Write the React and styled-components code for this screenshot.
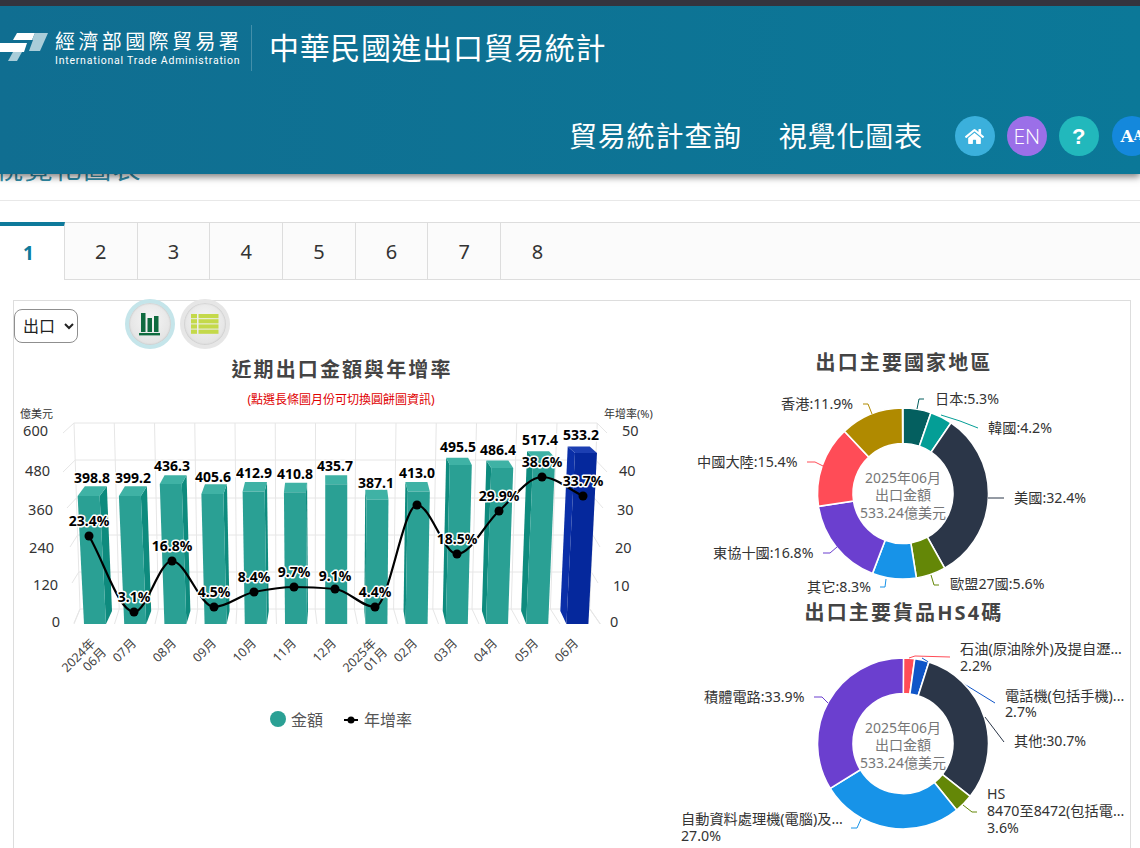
import React from 'react';
import styled, { createGlobalStyle } from 'styled-components';
import { FaHome } from 'react-icons/fa';

const FONT = '"Noto Sans", "Noto Sans CJK TC", sans-serif';

const GlobalStyle = createGlobalStyle`
  html, body {
    margin: 0;
    height: 848px;
    overflow: hidden;
    background: #fff;
    font-family: ${FONT};
  }
`;

const Header = styled.header`
  position: absolute;
  top: 0;
  left: 0;
  right: 0;
  z-index: 5;
  box-sizing: border-box;
  height: 174px;
  border-top: 6px solid #34343e;
  background: linear-gradient(90deg, #106e91, #0b7898);
  box-shadow: 0 3px 7px rgba(0, 0, 0, 0.5);
  color: #fff;
  overflow: hidden;
`;

const TopRow = styled.div`
  display: flex;
  align-items: center;
  height: 84px;
`;

const LogoText = styled.div`
  margin-left: 6px;
  width: 190px;
`;

const LogoName = styled.div`
  font-size: 20px;
  line-height: 24px;
  letter-spacing: 3.4px;
  white-space: nowrap;
`;

const LogoEnglish = styled.div`
  font-family: "Roboto", sans-serif;
  font-size: 10.5px;
  line-height: 13px;
  letter-spacing: 0.78px;
  white-space: nowrap;
`;

const Divider = styled.div`
  width: 1px;
  height: 46px;
  margin: 0 17px 0 6px;
  background: rgba(255, 255, 255, 0.22);
`;

const SiteTitle = styled.div`
  margin-top: -4px;
  font-size: 30px;
  letter-spacing: 0.65px;
  white-space: nowrap;
`;

const NavRow = styled.nav`
  display: flex;
  align-items: center;
  margin-top: 26px;
  padding-left: 569px;
  height: 40px;
`;

const NavLink = styled.a`
  margin-top: -2px;
  margin-right: 37px;
  font-size: 28px;
  letter-spacing: 0.8px;
  white-space: nowrap;
`;

const RoundButton = styled.span`
  flex: none;
  display: flex;
  align-items: center;
  justify-content: center;
  width: 40px;
  height: 40px;
  margin-left: ${(p) => p.$gap || 12}px;
  border-radius: 50%;
  background: ${(p) => p.$bg};
  font-size: 21px;
`;

const EnText = styled.span`
  font-family: "Open Sans", sans-serif;
  font-weight: 300;
`;

const Question = styled.span`
  margin-top: 2px;
  font-family: "Liberation Sans", sans-serif;
  font-weight: 700;
  font-size: 22px;
`;

const FontA = styled.span`
  font-family: "DejaVu Serif", serif;
  font-weight: 700;
  font-size: ${(p) => p.$size}px;
  line-height: 1;
`;

const Main = styled.main`
  padding-top: 150px;
`;

const PageTitle = styled.h1`
  box-sizing: border-box;
  height: 51px;
  margin: 0 0 21px;
  text-indent: -5px;
  font-size: 28px;
  line-height: 36px;
  font-weight: 400;
  letter-spacing: 1.4px;
  color: #2f8ba6;
  border-bottom: 1px solid #e8e8e8;
`;

const TabBar = styled.div`
  display: flex;
  height: 58px;
  box-sizing: border-box;
  border-top: 1px solid #ddd;
  border-bottom: 1px solid #ddd;
  background: #fbfbfb;
`;

const Tab = styled.div`
  box-sizing: border-box;
  width: 72.7px;
  display: flex;
  align-items: center;
  justify-content: center;
  font-size: 20px;
  color: #333;
  border-right: 1px solid #ddd;

  &:last-child {
    border-right: 0;
  }
`;

const ActiveTab = styled(Tab)`
  width: 65px;
  margin: -1px 0;
  padding: 0 7px 0 0;
  color: #0e7a9b;
  font-weight: 700;
  font-size: 19px;
  background: #fff;
  border-top: 4px solid #0e7a9b;
`;

const Panel = styled.section`
  box-sizing: border-box;
  width: 1118px;
  height: 600px;
  margin: 20px 0 0 13px;
  border: 1px solid #ddd;
  display: grid;
  grid-template-columns: 654px 454px;
  column-gap: 8px;
`;

const Toolbar = styled.div`
  display: flex;
  align-items: center;
  height: 46px;
  margin-bottom: 9px;
`;

const TypeSelect = styled.select`
  width: 64px;
  height: 34px;
  margin: 4px 47px 0 0;
  padding-left: 4px;
  border: 1px solid #8f8f8f;
  border-radius: 8px;
  background: #fff;
  color: #222;
  font-family: ${FONT};
  font-size: 16px;
`;

const ViewButton = styled.button`
  box-sizing: border-box;
  width: 50px;
  height: 50px;
  margin-right: 5px;
  padding: 0;
  display: flex;
  align-items: center;
  justify-content: center;
  border-radius: 50%;
  border: 4px solid ${(p) => p.$ring};
  background: radial-gradient(circle at 50% 40%, #f6f6f6, #dcdcdc);
  box-shadow: inset 0 0 2px rgba(0, 0, 0, 0.25);
`;

const ChartTitle = styled.h2`
  margin: 0 -2px 0 0;
  text-align: center;
  font-size: 20px;
  line-height: 28px;
  font-weight: 700;
  letter-spacing: 2.1px;
  color: #444;
`;

const ChartHint = styled.div`
  margin-top: 8px;
  text-align: center;
  font-size: 12px;
  line-height: 16px;
  color: #e00000;
`;

const ChartSvg = styled.svg`
  display: block;
  overflow: visible;
`;

const RightColumn = styled.div`
  padding-top: 48px;
`;

const AxisText = styled.text`
  font-size: ${(p) => p.$size || 14.5}px;
  fill: #333;
`;

const MonthText = styled.text`
  font-size: 12.5px;
  fill: #444;
`;

const DataLabel = styled.text`
  font-size: 14px;
  font-weight: 700;
  fill: #000;
  stroke: #fff;
  stroke-width: 3px;
  paint-order: stroke;
  stroke-linejoin: round;
`;

const LegendText = styled.text`
  font-size: 16px;
  fill: #555;
`;

const SliceLabel = styled.text`
  font-size: 14.2px;
  fill: #333;
`;

const CenterText = styled.text`
  font-size: 14px;
  fill: #777;
`;

// value, growth, point of the line, places of the two labels (page px)
const months = [
  { v: 398.8, g: '23.4%', p: [89, 536], vx: 92, vy: 478, gy: 521 },
  { v: 399.2, g: '3.1%', p: [134, 612], vx: 133, vy: 478, gy: 597 },
  { v: 436.3, g: '16.8%', p: [172, 561], vx: 172, vy: 466, gy: 546 },
  { v: 405.6, g: '4.5%', p: [214, 607], vx: 213, vy: 477, gy: 592 },
  { v: 412.9, g: '8.4%', p: [254, 592], vx: 254, vy: 473, gy: 577 },
  { v: 410.8, g: '9.7%', p: [294, 587], vx: 295, vy: 474, gy: 572 },
  { v: 435.7, g: '9.1%', p: [335, 589], vx: 335, vy: 466, gy: 576 },
  { v: 387.1, g: '4.4%', p: [375, 607], vx: 376, vy: 483, gy: 592 },
  { v: 413.0, g: '', p: [417, 505], vx: 417, vy: 473, gy: 490 },
  { v: 495.5, g: '18.5%', p: [457, 554], vx: 458, vy: 447, gy: 539 },
  { v: 486.4, g: '29.9%', p: [499, 511], vx: 498, vy: 450, gy: 496 },
  { v: 517.4, g: '38.6%', p: [542, 477], vx: 540, vy: 440, gy: 462 },
  { v: 533.2, g: '33.7%', p: [583, 496], vx: 581, vy: 435, gy: 481 },
];

const monthLabels = [
  ['06月', 107, 653], ['07月', 137, 644], ['08月', 177, 644], ['09月', 217, 644],
  ['10月', 257, 644], ['11月', 297, 644], ['12月', 337, 644], ['01月', 388, 653],
  ['02月', 418, 644], ['03月', 458, 644], ['04月', 498, 644], ['05月', 539, 644], ['06月', 579, 644],
];

const leftAxis = [['600', 48, 431], ['480', 50, 471], ['360', 53, 510], ['240', 54, 548], ['120', 58, 585], ['0', 60, 622]];
const rightAxis = [['50', 622, 431], ['40', 619, 471], ['30', 617, 510], ['20', 615, 548], ['10', 613, 586], ['0', 610, 622]];

const TEAL = { front: '#2aa094', top: '#3fb2a5', side: '#0e8b7e' };
const BLUE = { front: '#05289c', top: '#1c3fb2', side: '#0a2fa8' };

function pts(list) {
  return list.map((p) => p.join(',')).join(' ');
}

function Bar({ index, value, colors }) {
  const bl = 84 + 40.2 * index;
  const xc = bl + 11;
  const h = value * 0.3207;
  const topY = 624 - h;
  const shift = (xc - 335) * 0.000207 * h;
  const tl = bl + shift;
  const tr = tl + 22;
  const dxT = (335 - xc) * 0.03;
  const dyT = -(10 - (h - 126) * 0.08);
  const dxB = (335 - xc) * 0.025;
  const sideBottom = xc < 335 ? bl + 22 : bl;
  const sideTop = xc < 335 ? tr : tl;
  return (
    <g>
      <polygon
        fill={colors.side}
        points={pts([[sideTop, topY], [sideTop + dxT, topY + dyT], [sideBottom + dxB, 611], [sideBottom, 624]])}
      />
      <polygon
        fill={colors.top}
        points={pts([[tl, topY], [tr, topY], [tr + dxT, topY + dyT], [tl + dxT, topY + dyT]])}
      />
      <polygon fill={colors.front} points={pts([[tl, topY], [tr, topY], [bl + 22, 624], [bl, 624]])} />
    </g>
  );
}

// monotone curve through the points, flat at each peak and dip
function smoothLine(points) {
  const n = points.length;
  const slopes = [];
  for (let i = 0; i < n - 1; i++) {
    slopes.push((points[i + 1][1] - points[i][1]) / (points[i + 1][0] - points[i][0]));
  }
  const m = points.map((_, i) => {
    if (i === 0) return slopes[0];
    if (i === n - 1) return slopes[n - 2];
    if (slopes[i - 1] * slopes[i] <= 0) return 0;
    return (2 * slopes[i - 1] * slopes[i]) / (slopes[i - 1] + slopes[i]);
  });
  let d = `M${points[0][0]} ${points[0][1]}`;
  for (let i = 0; i < n - 1; i++) {
    const dx = (points[i + 1][0] - points[i][0]) / 3;
    d += ` C${points[i][0] + dx} ${points[i][1] + m[i] * dx} ${points[i + 1][0] - dx} ${points[i + 1][1] - m[i + 1] * dx} ${points[i + 1][0]} ${points[i + 1][1]}`;
  }
  return d;
}

function Grid() {
  const rows = [423, 460, 498, 535, 572, 609];
  const stubs = [[63, 433], [63, 472], [67, 508], [70, 547], [72, 583], [74, 623]];
  const stubsRight = [[607, 433], [607, 472], [603, 508], [600, 547], [598, 583], [600, 624]];
  const lines = [];
  rows.forEach((y, i) => {
    const left = 74 + i * 1.2;
    const right = 597 - i * 1.4;
    lines.push([left, y, right, y]);
    lines.push([left, y, stubs[i][0], stubs[i][1]]);
    lines.push([right, y, stubsRight[i][0], stubsRight[i][1]]);
  });
  for (let i = 0; i <= 13; i++) {
    const bottom = 80 + 39.2 * i;
    lines.push([74 + 40.25 * i, 423, bottom, 609]);
    lines.push([bottom, 609, 74 + 40.5 * i, 624]);
  }
  return (
    <g stroke="#e6e6e6" strokeWidth="1">
      {lines.map((l, i) => (
        <line key={i} x1={l[0]} y1={l[1]} x2={l[2]} y2={l[3]} />
      ))}
    </g>
  );
}

function TrendChart() {
  return (
    <ChartSvg width="654" height="340" viewBox="14 408 654 340">
      <AxisText $size={11} x="20" y="418">億美元</AxisText>
      <AxisText $size={11} x="604" y="418">年增率(%)</AxisText>
      <Grid />
      {leftAxis.map(([t, x, y]) => (
        <AxisText key={t} x={x} y={y + 5} textAnchor="end">{t}</AxisText>
      ))}
      {rightAxis.map(([t, x, y]) => (
        <AxisText key={t} x={x} y={y + 5}>{t}</AxisText>
      ))}
      {months.map((m, i) => (
        <Bar key={i} index={i} value={m.v} colors={i === 12 ? BLUE : TEAL} />
      ))}
      <path d={smoothLine(months.map((m) => m.p))} fill="none" stroke="#000" strokeWidth="2.2" />
      {months.map((m, i) => (
        <circle key={i} cx={m.p[0]} cy={m.p[1]} r="4.5" fill="#000" />
      ))}
      {months.map((m, i) => (
        <DataLabel key={i} x={m.vx} y={m.vy + 5} textAnchor="middle">{m.v.toFixed(1)}</DataLabel>
      ))}
      {months.map((m, i) => (
        <DataLabel key={i} x={m.p[0]} y={m.gy + 5} textAnchor="middle">{m.g}</DataLabel>
      ))}
      <MonthText x="96" y="644" textAnchor="end" transform="rotate(-45 96 644)">2024年</MonthText>
      <MonthText x="377" y="644" textAnchor="end" transform="rotate(-45 377 644)">2025年</MonthText>
      {monthLabels.map(([t, x, y], i) => (
        <MonthText key={i} x={x} y={y} textAnchor="end" transform={`rotate(-45 ${x} ${y})`}>{t}</MonthText>
      ))}
      <circle cx="278" cy="719" r="8" fill={TEAL.front} />
      <LegendText x="291" y="726">金額</LegendText>
      <line x1="344" y1="720" x2="358" y2="720" stroke="#000" strokeWidth="2" />
      <circle cx="351" cy="720" r="3.5" fill="#000" />
      <LegendText x="364" y="726">年增率</LegendText>
    </ChartSvg>
  );
}

function slicePath(cx, cy, from, to) {
  const R = 85.5;
  const r = 50;
  const point = (rad, pct) => {
    const a = (pct / 100) * Math.PI * 2 - Math.PI / 2;
    return `${cx + rad * Math.cos(a)} ${cy + rad * Math.sin(a)}`;
  };
  const large = to - from > 50 ? 1 : 0;
  return `M${point(R, from)} A${R} ${R} 0 ${large} 1 ${point(R, to)} L${point(r, to)} A${r} ${r} 0 ${large} 0 ${point(r, from)} Z`;
}

function Donut({ title, slices, labels, cy, top, height }) {
  let sum = 0;
  return (
    <div>
      <ChartTitle>{title}</ChartTitle>
      <ChartSvg width="454" height={height} viewBox={`676 ${top} 454 ${height}`}>
        {slices.map((s) => {
          const from = sum;
          sum += s.pct;
          return (
            <g key={s.color + s.pct}>
              <path d={slicePath(903, cy, from, sum)} fill={s.color} stroke="#fff" strokeWidth="1.6" />
              <polyline points={s.line} fill="none" stroke={s.color} strokeWidth="1" />
            </g>
          );
        })}
        {labels.map(([t, x, y]) => (
          <SliceLabel key={t} x={x} y={y + 5}>{t}</SliceLabel>
        ))}
        <CenterText x="903" y={cy - 11} textAnchor="middle">2025年06月</CenterText>
        <CenterText x="903" y={cy + 6} textAnchor="middle">出口金額</CenterText>
        <CenterText x="903" y={cy + 24} textAnchor="middle">533.24億美元</CenterText>
      </ChartSvg>
    </div>
  );
}

const countrySlices = [
  { pct: 5.3, color: '#045f5f', line: '917,409 919,399 924,399' },
  { pct: 4.2, color: '#049e96', line: '941,415 960,421 978,428' },
  { pct: 32.4, color: '#2b3648', line: '988,498 1004,498' },
  { pct: 5.6, color: '#648707', line: '931,575 934,585 939,585' },
  { pct: 8.3, color: '#1793e8', line: '886,579 885,587 880,587' },
  { pct: 16.8, color: '#6b3fcf', line: '837,547 830,553 823,553' },
  { pct: 15.4, color: '#ff4c57', line: '823,466 815,462 807,462' },
  { pct: 11.9, color: '#b08a00', line: '872,414 868,404 863,404' },
];

const countryLabels = [
  ['日本:5.3%', 935, 399],
  ['韓國:4.2%', 988, 428],
  ['美國:32.4%', 1014, 498],
  ['歐盟27國:5.6%', 950, 584],
  ['其它:8.3%', 807, 587],
  ['東協十國:16.8%', 713, 553],
  ['中國大陸:15.4%', 697, 462],
  ['香港:11.9%', 781, 404],
];

const goodsSlices = [
  { pct: 2.2, color: '#ff4c57', line: '909,658 915,656 950,657' },
  { pct: 2.7, color: '#0f55c8', line: '922,658 995,703' },
  { pct: 30.7, color: '#2b3648', line: '985,717 1004,742' },
  { pct: 3.6, color: '#648707', line: '963,805 972,812 977,812' },
  { pct: 27.0, color: '#1793e8', line: '861,819 857,828 851,828' },
  { pct: 33.9, color: '#6b3fcf', line: '828,703 822,697 814,697' },
];

const goodsLabels = [
  ['石油(原油除外)及提自瀝...', 960, 649],
  ['2.2%', 960, 666],
  ['電話機(包括手機)...', 1005, 696],
  ['2.7%', 1005, 712],
  ['其他:30.7%', 1014, 741],
  ['HS', 987, 794],
  ['8470至8472(包括電...', 987, 811],
  ['3.6%', 987, 828],
  ['自動資料處理機(電腦)及...', 681, 819],
  ['27.0%', 681, 836],
  ['積體電路:33.9%', 704, 697],
];

function Logo() {
  return (
    <svg width="49" height="32" viewBox="0 0 49 32" style={{ flex: 'none' }}>
      <polygon points="17,1 35,1 32,8 13,8" fill="#fff" />
      <polygon points="35,1 48,1 40,19 29,19 33,8 32,8" fill="#a9cdd9" />
      <polygon points="0,11 27,11 24,20 0,20" fill="#fff" />
      <polygon points="13,20 22,20 17,29 8,29" fill="#a9cdd9" />
    </svg>
  );
}

function BarsIcon() {
  return (
    <svg width="22" height="24" viewBox="0 0 22 24">
      <rect x="2" y="1" width="4.5" height="19" fill="#0f6b3f" />
      <rect x="8.5" y="6" width="4.5" height="14" fill="#0f6b3f" />
      <rect x="15" y="4" width="4.5" height="16" fill="#0f6b3f" />
      <rect x="0" y="21" width="21" height="2.4" fill="#0f6b3f" />
    </svg>
  );
}

function TableIcon() {
  const rows = [0, 5.2, 10.4, 15.6];
  return (
    <svg width="28" height="20" viewBox="0 0 28 20">
      {rows.map((y) => (
        <g key={y} fill="#c4d94a">
          <rect x="0" y={y} width="6" height="4.2" />
          <rect x="7.5" y={y} width="20" height="4.2" />
        </g>
      ))}
    </svg>
  );
}

export default function App() {
  return (
    <>
      <GlobalStyle />
      <Header>
        <TopRow>
          <Logo />
          <LogoText>
            <LogoName>經濟部國際貿易署</LogoName>
            <LogoEnglish>International Trade Administration</LogoEnglish>
          </LogoText>
          <Divider />
          <SiteTitle>中華民國進出口貿易統計</SiteTitle>
        </TopRow>
        <NavRow>
          <NavLink>貿易統計查詢</NavLink>
          <NavLink>視覺化圖表</NavLink>
          <RoundButton $bg="#3bb0dc" $gap={-5}><FaHome size={19} /></RoundButton>
          <RoundButton $bg="#9b6fe8"><EnText>EN</EnText></RoundButton>
          <RoundButton $bg="#22b8bc"><Question>?</Question></RoundButton>
          <RoundButton $bg="#1488dc" $gap={13}>
            <FontA $size={17}>A</FontA>
            <FontA $size={12}>A</FontA>
          </RoundButton>
        </NavRow>
      </Header>
      <Main>
        <PageTitle>視覺化圖表</PageTitle>
        <TabBar>
          <ActiveTab>1</ActiveTab>
          {[2, 3, 4, 5, 6, 7, 8].map((n) => (
            <Tab key={n}>{n}</Tab>
          ))}
        </TabBar>
        <Panel>
          <div>
            <Toolbar>
              <TypeSelect defaultValue="出口">
                <option>出口</option>
                <option>進口</option>
              </TypeSelect>
              <ViewButton $ring="#c5e5ea"><BarsIcon /></ViewButton>
              <ViewButton $ring="#e6e6e6"><TableIcon /></ViewButton>
            </Toolbar>
            <ChartTitle>近期出口金額與年增率</ChartTitle>
            <ChartHint>(點選長條圖月份可切換圓餅圖資訊)</ChartHint>
            <TrendChart />
          </div>
          <RightColumn>
            <Donut
              title="出口主要國家地區"
              slices={countrySlices}
              labels={countryLabels}
              cy={493.5}
              top={377}
              height={222}
            />
            <Donut
              title="出口主要貨品HS4碼"
              slices={goodsSlices}
              labels={goodsLabels}
              cy={743.5}
              top={627}
              height={240}
            />
          </RightColumn>
        </Panel>
      </Main>
    </>
  );
}
